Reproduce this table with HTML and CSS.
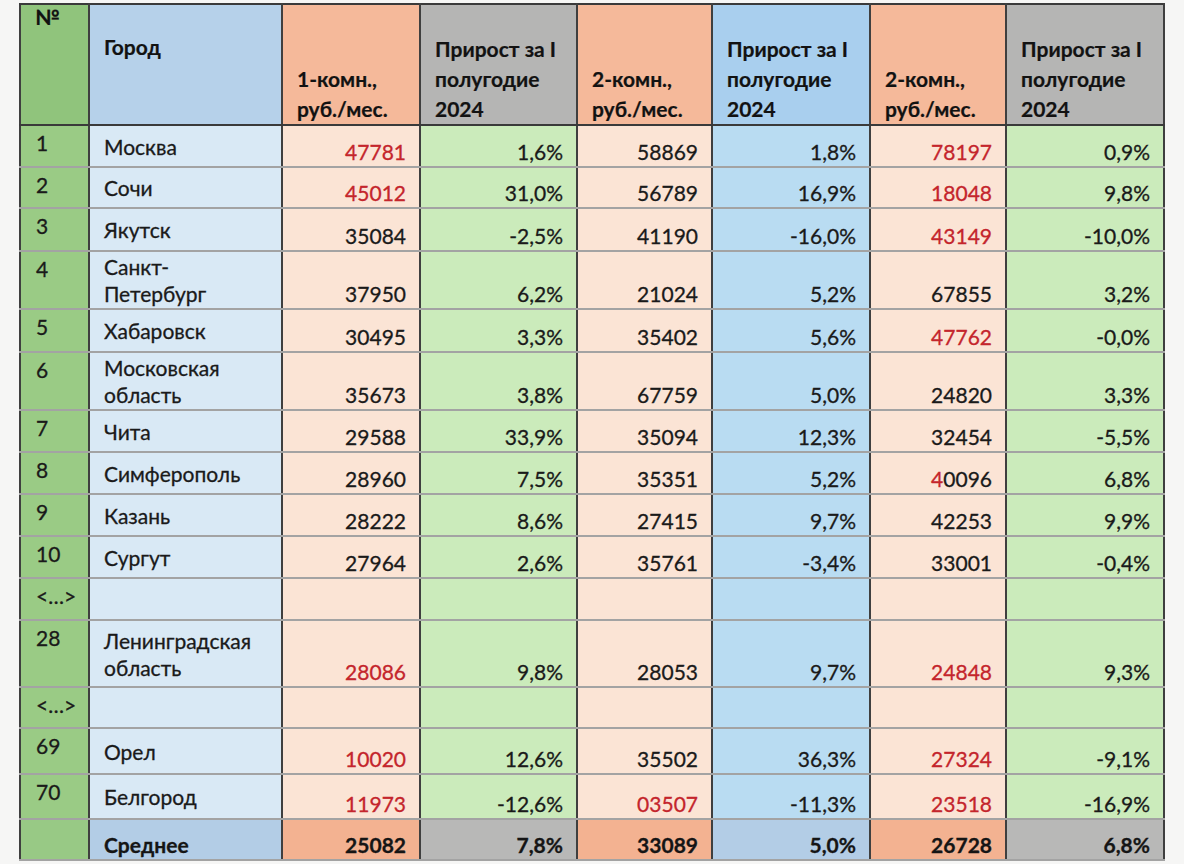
FILE: index.html
```html
<!DOCTYPE html>
<html lang="ru">
<head>
<meta charset="utf-8">
<title>Аренда</title>
<link rel="stylesheet" href="styles.css">
</head>
<body>
<table class="rent">
  <colgroup>
    <col class="c-no"><col class="c-city"><col class="c-p1"><col class="c-g1"><col class="c-p2"><col class="c-g2"><col class="c-p3"><col class="c-g3">
  </colgroup>
  <thead>
    <tr class="hdr">
      <th class="no h-green">№</th>
      <th class="city h-blue">Город</th>
      <th class="num h-salmon">1-комн.,<br>руб./мес.</th>
      <th class="grow h-grey">Прирост за I<br>полугодие<br>2024</th>
      <th class="num h-salmon">2-комн.,<br>руб./мес.</th>
      <th class="grow h-blue2">Прирост за I<br>полугодие<br>2024</th>
      <th class="num h-salmon">2-комн.,<br>руб./мес.</th>
      <th class="grow h-grey">Прирост за I<br>полугодие<br>2024</th>
    </tr>
  </thead>
  <tbody>
    <tr><td class="no">1</td><td class="city">Москва</td><td class="v peach red">47781</td><td class="v green">1,6%</td><td class="v peach">58869</td><td class="v blue">1,8%</td><td class="v peach red">78197</td><td class="v green">0,9%</td></tr>
    <tr class="r41"><td class="no">2</td><td class="city">Сочи</td><td class="v peach red">45012</td><td class="v green">31,0%</td><td class="v peach">56789</td><td class="v blue">16,9%</td><td class="v peach red">18048</td><td class="v green">9,8%</td></tr>
    <tr class="r43"><td class="no">3</td><td class="city">Якутск</td><td class="v peach">35084</td><td class="v green">-2,5%</td><td class="v peach">41190</td><td class="v blue">-16,0%</td><td class="v peach red">43149</td><td class="v green">-10,0%</td></tr>
    <tr class="r58"><td class="no">4</td><td class="city">Санкт-<br>Петербург</td><td class="v peach">37950</td><td class="v green">6,2%</td><td class="v peach">21024</td><td class="v blue">5,2%</td><td class="v peach">67855</td><td class="v green">3,2%</td></tr>
    <tr class="r43"><td class="no">5</td><td class="city">Хабаровск</td><td class="v peach">30495</td><td class="v green">3,3%</td><td class="v peach">35402</td><td class="v blue">5,6%</td><td class="v peach red">47762</td><td class="v green">-0,0%</td></tr>
    <tr class="r58"><td class="no">6</td><td class="city">Московская<br>область</td><td class="v peach">35673</td><td class="v green">3,8%</td><td class="v peach">67759</td><td class="v blue">5,0%</td><td class="v peach">24820</td><td class="v green">3,3%</td></tr>
    <tr><td class="no">7</td><td class="city">Чита</td><td class="v peach">29588</td><td class="v green">33,9%</td><td class="v peach">35094</td><td class="v blue">12,3%</td><td class="v peach">32454</td><td class="v green">-5,5%</td></tr>
    <tr><td class="no">8</td><td class="city">Симферополь</td><td class="v peach">28960</td><td class="v green">7,5%</td><td class="v peach">35351</td><td class="v blue">5,2%</td><td class="v peach"><span class="red">4</span>0096</td><td class="v green">6,8%</td></tr>
    <tr><td class="no">9</td><td class="city">Казань</td><td class="v peach">28222</td><td class="v green">8,6%</td><td class="v peach">27415</td><td class="v blue">9,7%</td><td class="v peach">42253</td><td class="v green">9,9%</td></tr>
    <tr><td class="no">10</td><td class="city">Сургут</td><td class="v peach">27964</td><td class="v green">2,6%</td><td class="v peach">35761</td><td class="v blue">-3,4%</td><td class="v peach">33001</td><td class="v green">-0,4%</td></tr>
    <tr><td class="no">&lt;…&gt;</td><td class="city"></td><td class="v peach"></td><td class="v green"></td><td class="v peach"></td><td class="v blue"></td><td class="v peach"></td><td class="v green"></td></tr>
    <tr class="r67"><td class="no">28</td><td class="city">Ленинградская<br>область</td><td class="v peach red">28086</td><td class="v green">9,8%</td><td class="v peach">28053</td><td class="v blue">9,7%</td><td class="v peach red">24848</td><td class="v green">9,3%</td></tr>
    <tr class="r41"><td class="no">&lt;…&gt;</td><td class="city"></td><td class="v peach"></td><td class="v green"></td><td class="v peach"></td><td class="v blue"></td><td class="v peach"></td><td class="v green"></td></tr>
    <tr class="r46"><td class="no">69</td><td class="city">Орел</td><td class="v peach red">10020</td><td class="v green">12,6%</td><td class="v peach">35502</td><td class="v blue">36,3%</td><td class="v peach red">27324</td><td class="v green">-9,1%</td></tr>
    <tr class="r45"><td class="no">70</td><td class="city">Белгород</td><td class="v peach red">11973</td><td class="v green">-12,6%</td><td class="v peach red">03507</td><td class="v blue">-11,3%</td><td class="v peach red">23518</td><td class="v green">-16,9%</td></tr>
  </tbody>
  <tfoot>
    <tr class="foot">
      <td class="no f-green"></td>
      <td class="city f-blue">Среднее</td>
      <td class="v f-salmon">25082</td>
      <td class="v f-grey">7,8%</td>
      <td class="v f-salmon">33089</td>
      <td class="v f-blue">5,0%</td>
      <td class="v f-salmon">26728</td>
      <td class="v f-grey">6,8%</td>
    </tr>
  </tfoot>
</table>
</body>
</html>
```

FILE: styles.css
```css
html, body {
  margin: 0;
  padding: 0;
}

body {
  background: #f6f6f5;
  font-family: Lato, "Open Sans", "Liberation Sans", sans-serif;
  color: #1a1a1a;
  width: 1184px;
  height: 864px;
  overflow: hidden;
}

.rent {
  margin: 3px 0 0 19px;
  border-collapse: collapse;
  table-layout: fixed;
  width: 1145px;
  font-size: 21px;
  line-height: 27px;
  border: 2px solid #3c3c3c;
  -webkit-text-stroke: 0.3px currentColor;
}

.c-no { width: 69px; }
.c-city { width: 193px; }
.c-p1 { width: 138px; }
.c-g1 { width: 157px; }
.c-p2 { width: 135px; }
.c-g2 { width: 158px; }
.c-p3 { width: 136px; }
.c-g3 { width: 158px; }

th, td {
  padding: 0 14px;
  border-left: 2px solid #3f3f3f;
  border-right: 2px solid #3f3f3f;
  border-top: 2px solid #a3a3a3;
  border-bottom: 2px solid #a3a3a3;
  overflow: hidden;
  white-space: nowrap;
}

/* header */
.hdr { height: 121px; }

th {
  font-weight: 700;
  text-align: left;
  line-height: 30px;
  vertical-align: bottom;
  color: #121212;
  border-bottom: 2px solid #3a3a3a;
  border-top: 2px solid #3a3a3a;
  -webkit-text-stroke: 0.2px currentColor;
}

th.no {
  vertical-align: top;
  line-height: 24px;
  padding-top: 0;
}

th.city {
  vertical-align: top;
  padding-top: 27px;
}

.h-green { background: #90c47c; }
.h-blue { background: #b6d1ea; }
.h-salmon { background: #f5b99a; }
.h-grey { background: #b5b5b4; }
.h-blue2 { background: #a9cfee; }

/* body rows */
tbody tr { height: 42px; }
tbody tr.r41 { height: 41px; }
tbody tr.r43 { height: 43px; }
tbody tr.r45 { height: 45px; }
tbody tr.r46 { height: 46px; }
tbody tr.r58 { height: 58px; }
tbody tr.r67 { height: 67px; }

td.no {
  background: #9acb85;
  vertical-align: top;
  padding-top: 3px;
  padding-left: 15px;
}

td.city {
  background: #d9e9f5;
  vertical-align: middle;
  padding-left: 14px;
}

td.v {
  text-align: right;
  vertical-align: bottom;
  padding-right: 13px;
  line-height: 29px;
}

.peach { background: #fbe4d5; }
.green { background: #cbebbb; }
.blue { background: #b9dcf2; }

.red { color: #c4252c; }

/* footer */
.foot { height: 41px; }

.foot td {
  font-weight: 700;
  color: #151515;
  border-top: 2px solid #2e2e2e;
  vertical-align: bottom;
  line-height: 29px;
}

.f-green { background: #98c985 !important; }
.f-blue { background: #b3cde6 !important; }
.f-salmon { background: #f3b291; }
.f-grey { background: #b8b8b7; }
```
